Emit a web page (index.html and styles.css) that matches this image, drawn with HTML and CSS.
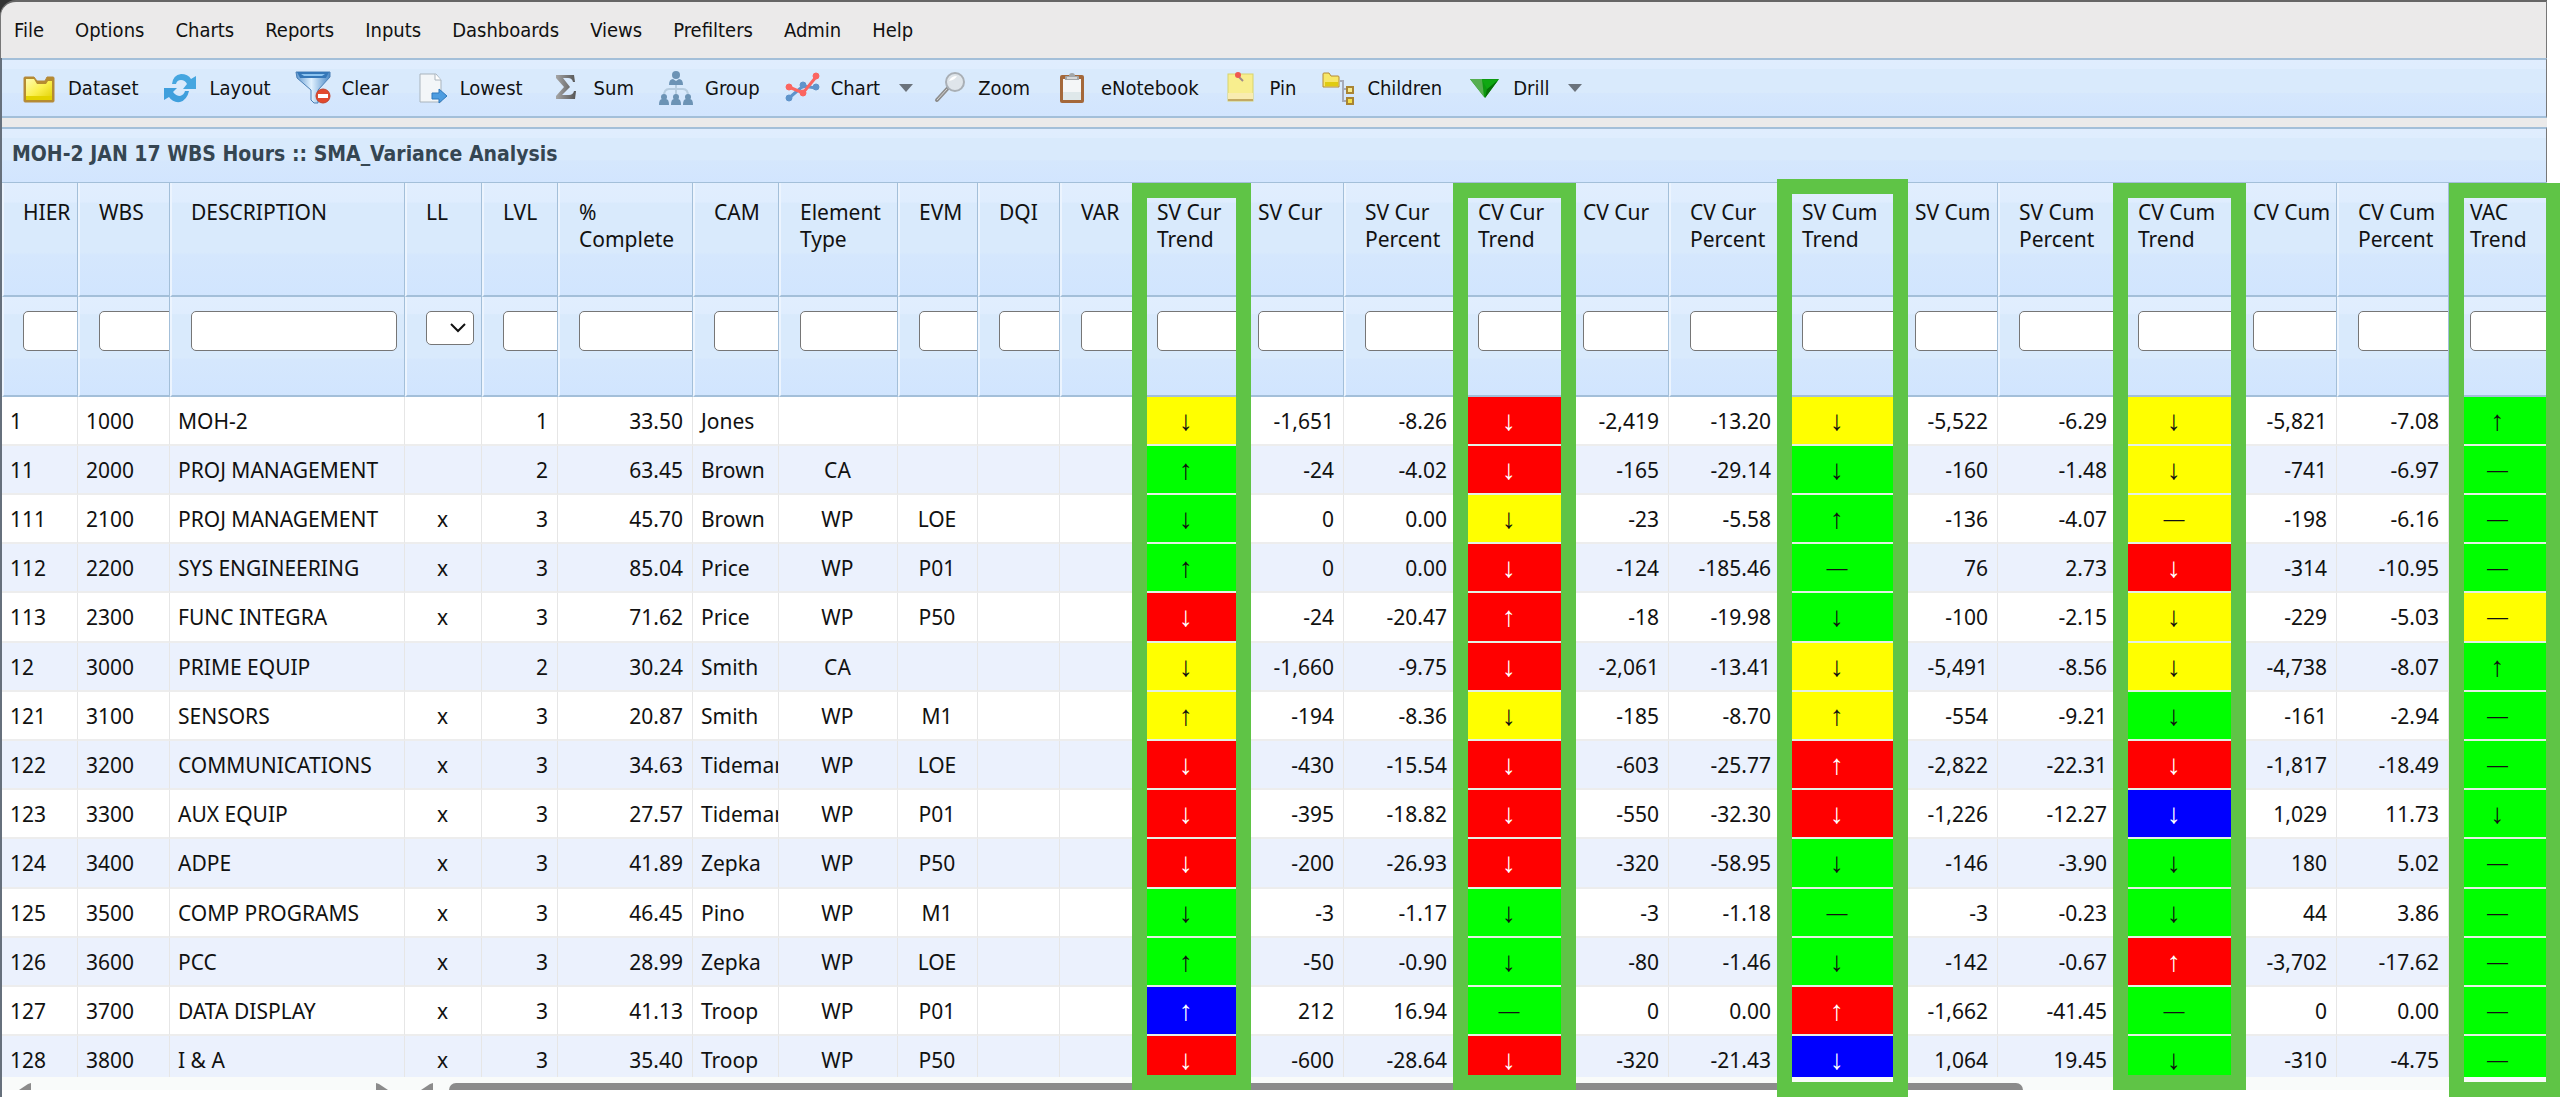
FILE: index.html
```html
<!DOCTYPE html>
<html lang="en">
<head>
  <meta charset="UTF-8" />
  <meta name="viewport" content="width=device-width, initial-scale=1.0"/>
  <title>MOH-2 JAN 17 WBS Hours</title>
  <link rel="stylesheet" href="styles.css">
</head>
<body>

  <div class="app">
    <div class="menubar-wrap">
      <nav class="menubar">
        <a href="#">File</a>
        <a href="#">Options</a>
        <a href="#">Charts</a>
        <a href="#">Reports</a>
        <a href="#">Inputs</a>
        <a href="#">Dashboards</a>
        <a href="#">Views</a>
        <a href="#">Prefilters</a>
        <a href="#">Admin</a>
        <a href="#">Help</a>
      </nav>
    </div>

    <div class="toolbar">
      <button type="button">
        <svg class="icon" viewBox="0 0 34 34">
          <defs>
            <linearGradient id="gold" x1="0" y1="0" x2="1" y2="1"><stop offset="0" stop-color="#fffbb0"/><stop offset="0.5" stop-color="#fbf04e"/><stop offset="1" stop-color="#e0cf00"/></linearGradient>
          </defs>
          <path d="M2 7q0-1 1-1h9l3 4h8l2-4h6q1 0 1 1v23q0 1-1 1H3q-1 0-1-1z" fill="#b58c30" stroke="#b5883a" stroke-width="1"/>
          <path d="M4 8h8l3 5h9l2-3h4v19H4z" fill="url(#gold)"/>
          <path d="M4 25h26v4H4z" fill="#e3d200"/>
        </svg>
        Dataset
      </button>
      <button type="button">
        <svg class="icon" viewBox="0 0 34 34">
          <path d="M9 13Q10 4 18 3q7 0 10 5l5-3v13H20l4-5q-2-4-6-4-4 0-5 4z" fill="#45a6e0"/>
          <path d="M26 20q-2 9-9 11-7 1-11-5l-5 3V17h13l-4 4q3 4 7 4 4-1 5-5z" fill="#3f9fdd"/>
        </svg>
        Layout
      </button>
      <button type="button">
        <svg class="icon" viewBox="0 0 34 34">
          <defs>
            <linearGradient id="funnel" x1="0" x2="1"><stop offset="0" stop-color="#5f97cf"/><stop offset="0.45" stop-color="#e2f2ff"/><stop offset="1" stop-color="#4a88c6"/></linearGradient>
          </defs>
          <path d="M0 1h34v5L22 19v13h-4l-3-3V19L1 7z" fill="url(#funnel)" stroke="#4a7fb5" stroke-width="1"/>
          <path d="M1 1h32l-3 6H4z" fill="#3577b8"/>
          <path d="M5 3h24l-3 2H8z" fill="#8cc4f0"/>
          <circle cx="27" cy="25" r="7" fill="#e2492d" stroke="#c0412c" stroke-width="1"/>
          <rect x="22" y="23" width="10" height="4" fill="#fff"/>
        </svg>
        Clear
      </button>
      <button type="button">
        <svg class="icon" viewBox="0 0 34 34">
          <path d="M6 3h16l5 6v22H6z" fill="#f3f6f8" stroke="#a9b4bd" stroke-width="1"/>
          <path d="M21 3v6h6" fill="#fff" stroke="#a9b4bd" stroke-width="1"/>
          <path d="M18 22h7v-4l8 7-8 7v-4h-7z" fill="#4e9de0" stroke="#2f79bd" stroke-width="1"/>
        </svg>
        Lowest
      </button>
      <button type="button">
        <svg class="icon" viewBox="0 0 34 34">
          <defs>
            <linearGradient id="sigma" x1="0" x2="1"><stop offset="0" stop-color="#a5a5a5"/><stop offset="1" stop-color="#555"/></linearGradient>
          </defs>
          <path d="M8 4h18l1 7h-2q-1-4-5-4h-5l7 9-8 8h7q4 0 5-4h2l-1 8H8v-3l8-9-8-9z" fill="url(#sigma)"/>
        </svg>
        Sum
      </button>
      <button type="button">
        <svg class="icon" viewBox="0 0 34 34">
          <path d="M17 14v11M5 25q0-7 5-7h14q5 0 5 7" fill="none" stroke="#b7cde0" stroke-width="2"/>
          <g fill="#6c93b5">
            <circle cx="17" cy="4" r="4"/><path d="M10 14q0-6 4-6l3 2 3-2q4 0 4 6z"/>
            <circle cx="5" cy="26" r="3"/><path d="M0 34q0-6 3-6h4q3 0 3 6z"/>
            <circle cx="17" cy="26" r="3"/><path d="M12 34q0-6 3-6h4q3 0 3 6z"/>
            <circle cx="29" cy="26" r="3"/><path d="M24 34q0-6 3-6h4q3 0 3 6z"/>
          </g>
        </svg>
        Group
      </button>
      <button type="button">
        <svg class="icon" viewBox="0 0 34 34">
          <g fill="#5f94cb" stroke="#5f94cb">
            <path d="M4 27l14-12 13 2" fill="none" stroke-width="3"/>
            <circle cx="4" cy="27" r="3"/><circle cx="18" cy="14" r="3"/><circle cx="31" cy="16" r="3"/>
          </g>
          <g fill="#fb6560" stroke="#fb6560">
            <path d="M4 16l14 6L31 6" fill="none" stroke-width="3"/>
            <circle cx="4" cy="16" r="3"/><circle cx="18" cy="22" r="3"/><circle cx="31" cy="5" r="3"/>
          </g>
        </svg>
        Chart
        <svg class="caret" viewBox="0 0 14 8"><path d="M0 0h14L7 8z"/></svg>
      </button>
      <button type="button">
        <svg class="icon" viewBox="0 0 34 34">
          <path d="M16 17L5 29" stroke="#8d8d8d" stroke-width="4" stroke-linecap="round"/>
          <path d="M15 18L5 29" stroke="#d5d5d5" stroke-width="1"/>
          <circle cx="23" cy="11" r="9" fill="#dfe5ea" stroke="#a9afb5" stroke-width="2"/>
          <path d="M17 10q2-5 8-5-2 4-8 5z" fill="#fff"/>
        </svg>
        Zoom
      </button>
      <button type="button">
        <svg class="icon" viewBox="0 0 34 34">
          <rect x="5" y="4" width="24" height="28" rx="2" fill="#a4683a"/>
          <rect x="8" y="8" width="18" height="21" fill="#f4f6f7"/>
          <path d="M8 21h18v8H8z" fill="#dfe8ea"/>
          <path d="M10 9V6q0-1 1-1h3q0-3 3-3t3 3h3q1 0 1 1v3z" fill="#a3a6a8"/>
          <path d="M12 6h10v2H12z" fill="#d6d8d9"/>
        </svg>
        eNotebook
      </button>
      <button type="button">
        <svg class="icon" viewBox="0 0 34 34">
          <rect x="4" y="3" width="25" height="27" fill="#f8ee8e" stroke="#d8d36c" stroke-width="1"/>
          <path d="M4 22h25v7H4z" fill="#f9ecb0"/>
          <path d="M4 28h25v2H4z" fill="#c3aa62"/>
          <path d="M15 6l4 4" stroke="#a08a8a" stroke-width="2"/>
          <circle cx="14" cy="4" r="3" fill="#ef5850"/>
        </svg>
        Pin
      </button>
      <button type="button">
        <svg class="icon" viewBox="0 0 34 34">
          <path d="M19 10h3v20h5M22 18h5" fill="none" stroke="#a6aab8" stroke-width="2"/>
          <path d="M2 3q0-1 1-1h5l2 3h7q1 0 1 1v10H2z" fill="#f7e768" stroke="#b48a35" stroke-width="1"/>
          <path d="M4 11h13v4H4z" fill="#e0cb10"/>
          <rect x="26" y="16" width="6" height="6" fill="#f7eb8c" stroke="#a98433" stroke-width="2"/>
          <rect x="26" y="27" width="6" height="6" fill="#f3e04c" stroke="#a98433" stroke-width="2"/>
        </svg>
        Children
      </button>
      <button type="button">
        <svg class="icon" viewBox="0 0 34 34">
          <path d="M3 8h29L18 27z" fill="#0d9a10"/>
          <path d="M3 8h12l2 18z" fill="#56ae50"/>
          <path d="M18 27l2-9 12-10z" fill="#067008"/>
          <path d="M15 9h16l-11 9z" fill="#10a813"/>
        </svg>
        Drill
        <svg class="caret" viewBox="0 0 14 8"><path d="M0 0h14L7 8z"/></svg>
      </button>
    </div>

    <h1 class="title">MOH-2 JAN 17 WBS Hours :: SMA_Variance Analysis</h1>

    <div class="grid-panel">
      <div class="grid-view">
        <table class="grid">
          <colgroup id="cols"></colgroup>
          <thead>
            <tr class="heads" id="heads"></tr>
            <tr class="filters" id="filters"></tr>
          </thead>
          <tbody id="rows"></tbody>
        </table>
      </div>
      <div class="scrollbar">
        <svg class="arrow" viewBox="0 0 12 7"><path d="M12 0v7H0L9 1z"/></svg>
        <svg class="arrow arrow-right" viewBox="0 0 12 7"><path d="M0 0v7h12L3 1z"/></svg>
        <svg class="arrow" viewBox="0 0 12 7"><path d="M12 0v7H0L9 1z"/></svg>
        <div class="track"><div class="thumb"></div></div>
      </div>
      <!-- green frames over the trend columns -->
      <div class="marks" id="marks"></div>
    </div>
  </div>

  <script src="grid.js"></script>
</body>
</html>
```
FILE: styles.css
```css
* { margin: 0; padding: 0; box-sizing: border-box; }
body {
  background-color: #fff;
  font-family: 'DejaVu Sans Condensed', 'DejaVu Sans', sans-serif;
  font-size: 20px;
  color: #111;
  overflow: hidden;
}
.app {
  height: 100vh;
  display: flex;
  flex-direction: column;
  margin-right: 13px;
  border-left: 2px solid #66707c;
  padding-bottom: 7px;
  background-color: #ebeaea;
  background-clip: content-box;
}

/* menu */
.menubar-wrap { background-color: #333; margin-left: -2px; }
.menubar {
  display: flex;
  align-items: center;
  gap: 31px;
  height: 58px;
  padding-left: 13px;
  background-color: #ebeaea;
  border-top: 2px solid #666;
  border-left: 1px solid #777;
  border-top-left-radius: 16px;
}
.menubar a { color: #111; text-decoration: none; }

/* toolbar */
.toolbar {
  display: flex;
  align-items: center;
  gap: 25px;
  height: 60px;
  padding-left: 20px;
  border-top: 2px solid #a3bfd9;
  border-bottom: 2px solid #a3bfd9;
  background: linear-gradient(#e0edfe 0, #dfedfe 16%, #d9eafc 17%, #d9eafc 58%, #d5e7fd 60%, #d2e5fe 100%);
}
.toolbar button {
  display: flex;
  align-items: center;
  background: none;
  border: none;
  font: inherit;
  color: #111;
  cursor: pointer;
}
.icon { width: 34px; height: 34px; margin-right: 12px; overflow: visible; }
.caret { width: 14px; height: 8px; margin-left: 19px; fill: #6b737c; }
.toolbar button:has(.caret) { margin-right: -6px; }

.menubar, .toolbar, .title { border-right: 1px solid #777; }

.title {
  height: 55px;
  margin-top: 9px;
  padding-left: 10px;
  border-top: 2px solid #a3bfd9;
  background: linear-gradient(#e0edfe 0, #dfedfe 16%, #d9eafc 17%, #d9eafc 58%, #d5e7fd 60%, #d2e5fe 100%);
  color: #354652;
  font-size: 21px;
  line-height: 50px;
  font-weight: bold;
}

/* grid */
.grid-panel {
  position: relative;
  flex: 1;
  min-height: 0;
  display: flex;
  flex-direction: column;
  border-top: 1px solid #a3bfd9;
}
.grid-view { flex: 1; min-height: 0; overflow: hidden; background-color: #fff; }
.grid {
  width: 100%;
  table-layout: fixed;
  border-collapse: separate;
  border-spacing: 0;
  font-family: 'Noto Sans', sans-serif;
  font-size: 21px;
}
.grid th {
  overflow: hidden;
  padding-left: 19px;
  text-align: left;
  vertical-align: top;
  font-weight: normal;
  line-height: 27px;
  white-space: pre;
  border-left: 2px solid #ecf4fe;
  border-right: 1px solid #a3bfd9;
  border-bottom: 2px solid #a3bfd9;
  background: linear-gradient(#e1eefe 0, #dfedfe 17%, #d9eafc 18%, #d9eafc 62%, #d5e7fd 64%, #d1e5fe 100%);
}
.heads th { height: 114px; padding-top: 16px; }
.filters th { height: 100px; padding-top: 14px; }
.filters input, .filters select {
  display: block;
  width: 206px;
  height: 40px;
  border: 1px solid #767676;
  border-radius: 5px;
  background-color: #fff;
  font: inherit;
}
.filters select {
  width: 48px;
  height: 34px;
  appearance: none;
  background: #fff url("data:image/svg+xml,%3Csvg xmlns='http://www.w3.org/2000/svg' viewBox='0 0 16 10'%3E%3Cpath d='M1 1l7 7 7-7' fill='none' stroke='%23111' stroke-width='2'/%3E%3C/svg%3E") no-repeat right 7px center / 16px 10px;
}
.grid td {
  height: 49px;
  overflow: hidden;
  padding: 0 9px 0 8px;
  line-height: 28px;
  white-space: nowrap;
  text-overflow: clip;
  border-right: 1px solid #e6e6e6;
  border-bottom: 2px solid #ededed;
}
.grid tbody tr:nth-child(5n) td { height: 50px; }
.grid tbody tr:nth-child(even) { background-color: #ebf1fd; }
.grid .num { text-align: right; }
.grid .mid { text-align: center; }
.grid .trend {
  padding: 0;
  text-align: center;
  font-family: 'Liberation Sans', sans-serif;
  font-size: 28px;
  border-bottom-color: #e4f0e4;
}
.grid .flat { font-size: 21px; }
.yellow { background-color: #ffff00; }
.green { background-color: #00ff00; }
.red { background-color: #ff0000; color: #fff; }
.blue { background-color: #0000ff; color: #fff; }

.scrollbar {
  display: flex;
  align-items: flex-end;
  height: 13px;
  overflow: hidden;
  background-color: #f9fbfa;
}
.arrow { width: 12px; height: 7px; margin-left: 17px; fill: #8b8b8b; }
.arrow-right { margin-left: 345px; margin-right: 16px; }
.track { flex: 1; margin-left: 16px; }
.thumb { width: 75%; height: 7px; background-color: #8b8b8b; border-radius: 7px 7px 0 0; }

.marks {
  position: absolute;
  top: -4px;
  right: 0;
  bottom: -7px;
  left: 0;
  display: grid;
  pointer-events: none;
}
.mark { margin: 4px -14px 7px -4px; border: 15px solid #5fc446; }
.mark-high { margin-top: 0; }
.mark-tall { margin-bottom: 0; }
.mark-last { margin-left: 0; }
```
FILE: grid.js
```javascript
// title, relative width, cell alignment
const columns = [
  ["HIER", 76], ["WBS", 92], ["DESCRIPTION", 235], ["LL", 77, "mid"], ["LVL", 76, "num"],
  ["%\nComplete", 135, "num"], ["CAM", 86], ["Element\nType", 119, "mid"], ["EVM", 80, "mid"],
  ["DQI", 82], ["VAR", 76],
  ["SV Cur\nTrend", 101, "trend"], ["SV Cur", 107, "num"], ["SV Cur\nPercent", 113, "num"],
  ["CV Cur\nTrend", 105, "trend"], ["CV Cur", 107, "num"], ["CV Cur\nPercent", 112, "num"],
  ["SV Cum\nTrend", 113, "trend"], ["SV Cum", 104, "num"], ["SV Cum\nPercent", 119, "num"],
  ["CV Cum\nTrend", 115, "trend"], ["CV Cum", 105, "num"], ["CV Cum\nPercent", 112, "num"],
  ["VAC\nTrend", 98, "trend"]
];

// trend cells: colour letter + direction (u = up, d = down, n = no change)
const rows = [
  "1|1000|MOH-2||1|33.50|Jones|||||yd|-1,651|-8.26|rd|-2,419|-13.20|yd|-5,522|-6.29|yd|-5,821|-7.08|gu",
  "11|2000|PROJ MANAGEMENT||2|63.45|Brown|CA||||gu|-24|-4.02|rd|-165|-29.14|gd|-160|-1.48|yd|-741|-6.97|gn",
  "111|2100|PROJ MANAGEMENT|x|3|45.70|Brown|WP|LOE|||gd|0|0.00|yd|-23|-5.58|gu|-136|-4.07|yn|-198|-6.16|gn",
  "112|2200|SYS ENGINEERING|x|3|85.04|Price|WP|P01|||gu|0|0.00|rd|-124|-185.46|gn|76|2.73|rd|-314|-10.95|gn",
  "113|2300|FUNC INTEGRA|x|3|71.62|Price|WP|P50|||rd|-24|-20.47|ru|-18|-19.98|gd|-100|-2.15|yd|-229|-5.03|yn",
  "12|3000|PRIME EQUIP||2|30.24|Smith|CA||||yd|-1,660|-9.75|rd|-2,061|-13.41|yd|-5,491|-8.56|yd|-4,738|-8.07|gu",
  "121|3100|SENSORS|x|3|20.87|Smith|WP|M1|||yu|-194|-8.36|yd|-185|-8.70|yu|-554|-9.21|gd|-161|-2.94|gn",
  "122|3200|COMMUNICATIONS|x|3|34.63|Tideman|WP|LOE|||rd|-430|-15.54|rd|-603|-25.77|ru|-2,822|-22.31|rd|-1,817|-18.49|gn",
  "123|3300|AUX EQUIP|x|3|27.57|Tideman|WP|P01|||rd|-395|-18.82|rd|-550|-32.30|rd|-1,226|-12.27|bd|1,029|11.73|gd",
  "124|3400|ADPE|x|3|41.89|Zepka|WP|P50|||rd|-200|-26.93|rd|-320|-58.95|gd|-146|-3.90|gd|180|5.02|gn",
  "125|3500|COMP PROGRAMS|x|3|46.45|Pino|WP|M1|||gd|-3|-1.17|gd|-3|-1.18|gn|-3|-0.23|gd|44|3.86|gn",
  "126|3600|PCC|x|3|28.99|Zepka|WP|LOE|||gu|-50|-0.90|gd|-80|-1.46|gd|-142|-0.67|ru|-3,702|-17.62|gn",
  "127|3700|DATA DISPLAY|x|3|41.13|Troop|WP|P01|||bu|212|16.94|gn|0|0.00|ru|-1,662|-41.45|gn|0|0.00|gn",
  "128|3800|I & A|x|3|35.40|Troop|WP|P50|||rd|-600|-28.64|rd|-320|-21.43|bd|1,064|19.45|gd|-310|-4.75|gn"
];

const colours = { y: "yellow", g: "green", r: "red", b: "blue" };
const arrows = { u: "↑", d: "↓", n: "—" };
const total = columns.reduce((sum, c) => sum + c[1], 0);

function add(parent, tag, className, text) {
  const el = document.createElement(tag);
  if (className) el.className = className;
  if (text) el.textContent = text;
  parent.appendChild(el);
  return el;
}

const marks = document.getElementById("marks");
marks.style.gridTemplateColumns = columns.map(c => `minmax(0, ${c[1]}fr)`).join(" ");

columns.forEach(([title, width, kind], i) => {
  const name = title.replace("\n", " ");
  add(document.getElementById("cols"), "col").style.width = (width / total * 100) + "%";
  add(document.getElementById("heads"), "th", "", title);

  const cell = add(document.getElementById("filters"), "th");
  const field = add(cell, title === "LL" ? "select" : "input");
  field.setAttribute("aria-label", "Filter " + name);

  if (kind === "trend") {
    let className = "mark";
    if (name === "SV Cum Trend") className += " mark-high mark-tall";
    if (name === "VAC Trend") className += " mark-tall mark-last";
    add(marks, "div", className).style.gridColumn = i + 1;
  }
});

rows.forEach(line => {
  const tr = add(document.getElementById("rows"), "tr");
  line.split("|").forEach((value, i) => {
    const kind = columns[i][2] || "";
    if (kind === "trend") {
      const flat = value[1] === "n" ? " flat" : "";
      add(tr, "td", "trend " + colours[value[0]] + flat, arrows[value[1]]);
    } else {
      add(tr, "td", kind, value);
    }
  });
});
```
